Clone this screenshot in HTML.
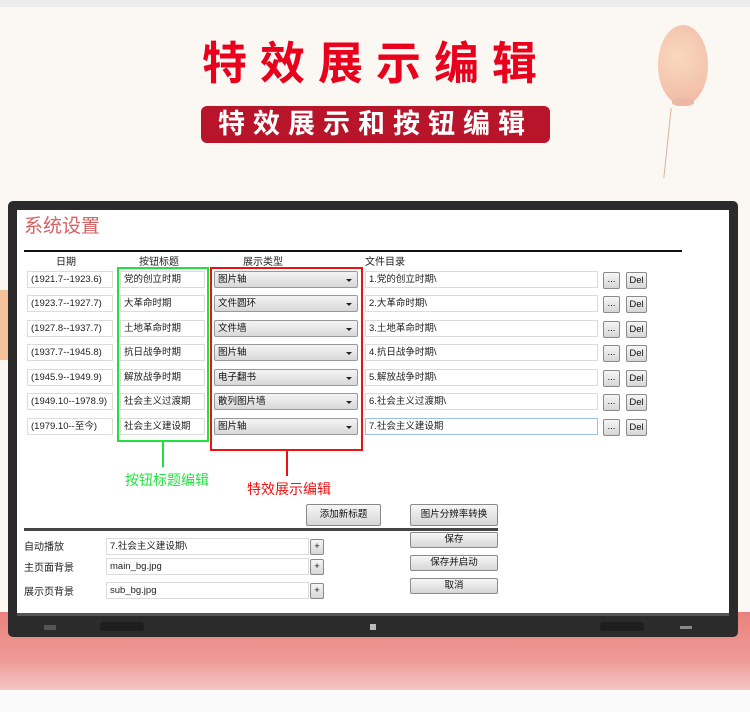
<!DOCTYPE html>
<html><head><meta charset="utf-8"><style>
*{margin:0;padding:0;box-sizing:border-box}
body{width:750px;height:712px;overflow:hidden;position:relative;background:#fbf7f2;font-family:"Liberation Sans","Noto Sans CJK SC",sans-serif}
.a{position:absolute}
.t1{left:202px;top:36px;font-size:45px;font-weight:bold;color:#e8001c;letter-spacing:13px;white-space:nowrap;line-height:56px}
.ban{left:201px;top:106px;width:349px;height:37px;background:#b8142a;border-radius:6px;color:#fff;font-size:27px;font-weight:bold;letter-spacing:8px;text-align:center;line-height:37px;white-space:nowrap}
.frame{left:8px;top:201px;width:730px;height:436px;background:#2b2b2b;border-radius:5px}
.screen{left:17px;top:210px;width:712px;height:403px;background:#fff}
.s{font-size:10px;color:#222;white-space:nowrap}
.in{border:1px solid #dcdcdc;background:#fff;height:17px;font-size:9.5px;line-height:15px;padding-left:3px;color:#222;white-space:nowrap;overflow:hidden}
.sel{border:1px solid #999;border-radius:2px;background:linear-gradient(#f4f4f4,#d8d8d8);height:17px;font-size:9.5px;line-height:15px;padding-left:3px;color:#111}
.sel:after{content:"";position:absolute;right:5px;top:7px;border:3px solid transparent;border-top:3px solid #222}
.btn{border:1px solid #8a8a8a;border-radius:2px;background:linear-gradient(#f6f6f6,#d6d6d6);font-size:9.5px;text-align:center;color:#111;white-space:nowrap}
</style></head><body>
<div class="a" style="left:0;top:0;width:750px;height:7px;background:#ececec"></div>
<div class="a" style="left:658px;top:25px;width:50px;height:80px;border-radius:50%;background:radial-gradient(circle at 40% 40%,#f8d2b0,#eda58e);opacity:.8"></div>
<div class="a" style="left:672px;top:98px;width:22px;height:8px;border-radius:40%;background:#eab8a4"></div>
<div class="a" style="left:667px;top:108px;width:1px;height:70px;background:#dbb0a0;transform:rotate(6deg)"></div>
<div class="a" style="left:0;top:612px;width:750px;height:80px;background:linear-gradient(#e9827d,#ee9a96 60%,#f4c9c8)"></div>
<div class="a" style="left:0;top:690px;width:750px;height:22px;background:#fafafa"></div>
<div class="a" style="left:0;top:290px;width:8px;height:70px;background:#f0a060;opacity:.6"></div>
<div class="a t1">特效展示编辑</div>
<div class="a ban">特效展示和按钮编辑</div>
<div class="a frame"></div>
<div class="a screen"></div>
<div class="a" style="left:17px;top:613px;width:712px;height:3px;background:#555"></div>
<div class="a" style="left:100px;top:622px;width:44px;height:9px;background:#1e1e1e;border-radius:3px"></div>
<div class="a" style="left:600px;top:622px;width:44px;height:9px;background:#1e1e1e;border-radius:3px"></div>
<div class="a" style="left:370px;top:624px;width:6px;height:6px;background:#bbb"></div>
<div class="a" style="left:44px;top:625px;width:12px;height:5px;background:#555"></div>
<div class="a" style="left:680px;top:626px;width:12px;height:3px;background:#888"></div>
<div class="a" style="left:24px;top:211px;font-size:19px;color:#d86060">系统设置</div>
<div class="a" style="left:24px;top:250px;width:658px;height:2px;background:#111"></div>
<div class="a s" style="left:56px;top:253px">日期</div>
<div class="a s" style="left:139px;top:253px">按钮标题</div>
<div class="a s" style="left:243px;top:253px">展示类型</div>
<div class="a s" style="left:365px;top:253px">文件目录</div>

<div class="a in" style="left:27px;top:271px;width:86px">(1921.7--1923.6)</div>
<div class="a in" style="left:120px;top:271px;width:85px">党的创立时期</div>
<div class="a sel" style="left:214px;top:271px;width:144px">图片轴</div>
<div class="a in" style="left:365px;top:271px;width:233px">1.党的创立时期\</div>
<div class="a btn" style="left:603px;top:272px;width:17px;height:17px;line-height:14px">...</div>
<div class="a btn" style="left:626px;top:272px;width:21px;height:17px;line-height:15px">Del</div>

<div class="a in" style="left:27px;top:295px;width:86px">(1923.7--1927.7)</div>
<div class="a in" style="left:120px;top:295px;width:85px">大革命时期</div>
<div class="a sel" style="left:214px;top:295px;width:144px">文件圆环</div>
<div class="a in" style="left:365px;top:295px;width:233px">2.大革命时期\</div>
<div class="a btn" style="left:603px;top:296px;width:17px;height:17px;line-height:14px">...</div>
<div class="a btn" style="left:626px;top:296px;width:21px;height:17px;line-height:15px">Del</div>

<div class="a in" style="left:27px;top:320px;width:86px">(1927.8--1937.7)</div>
<div class="a in" style="left:120px;top:320px;width:85px">土地革命时期</div>
<div class="a sel" style="left:214px;top:320px;width:144px">文件墙</div>
<div class="a in" style="left:365px;top:320px;width:233px">3.土地革命时期\</div>
<div class="a btn" style="left:603px;top:321px;width:17px;height:17px;line-height:14px">...</div>
<div class="a btn" style="left:626px;top:321px;width:21px;height:17px;line-height:15px">Del</div>

<div class="a in" style="left:27px;top:344px;width:86px">(1937.7--1945.8)</div>
<div class="a in" style="left:120px;top:344px;width:85px">抗日战争时期</div>
<div class="a sel" style="left:214px;top:344px;width:144px">图片轴</div>
<div class="a in" style="left:365px;top:344px;width:233px">4.抗日战争时期\</div>
<div class="a btn" style="left:603px;top:345px;width:17px;height:17px;line-height:14px">...</div>
<div class="a btn" style="left:626px;top:345px;width:21px;height:17px;line-height:15px">Del</div>

<div class="a in" style="left:27px;top:369px;width:86px">(1945.9--1949.9)</div>
<div class="a in" style="left:120px;top:369px;width:85px">解放战争时期</div>
<div class="a sel" style="left:214px;top:369px;width:144px">电子翻书</div>
<div class="a in" style="left:365px;top:369px;width:233px">5.解放战争时期\</div>
<div class="a btn" style="left:603px;top:370px;width:17px;height:17px;line-height:14px">...</div>
<div class="a btn" style="left:626px;top:370px;width:21px;height:17px;line-height:15px">Del</div>

<div class="a in" style="left:27px;top:393px;width:86px">(1949.10--1978.9)</div>
<div class="a in" style="left:120px;top:393px;width:85px">社会主义过渡期</div>
<div class="a sel" style="left:214px;top:393px;width:144px">散列图片墙</div>
<div class="a in" style="left:365px;top:393px;width:233px">6.社会主义过渡期\</div>
<div class="a btn" style="left:603px;top:394px;width:17px;height:17px;line-height:14px">...</div>
<div class="a btn" style="left:626px;top:394px;width:21px;height:17px;line-height:15px">Del</div>

<div class="a in" style="left:27px;top:418px;width:86px">(1979.10--至今)</div>
<div class="a in" style="left:120px;top:418px;width:85px">社会主义建设期</div>
<div class="a sel" style="left:214px;top:418px;width:144px">图片轴</div>
<div class="a in" style="left:365px;top:418px;width:233px;border-color:#9cc0e0">7.社会主义建设期</div>
<div class="a btn" style="left:603px;top:419px;width:17px;height:17px;line-height:14px">...</div>
<div class="a btn" style="left:626px;top:419px;width:21px;height:17px;line-height:15px">Del</div>

<div class="a" style="left:117px;top:267px;width:92px;height:175px;border:2px solid #22e040"></div>
<div class="a" style="left:162px;top:441px;width:2px;height:26px;background:#22e040"></div>
<div class="a" style="left:125px;top:470px;font-size:14px;color:#22e040">按钮标题编辑</div>
<div class="a" style="left:210px;top:267px;width:153px;height:184px;border:2px solid #ee1111"></div>
<div class="a" style="left:286px;top:450px;width:2px;height:26px;background:#ee1111"></div>
<div class="a" style="left:247px;top:479px;font-size:14px;color:#ee1111">特效展示编辑</div>

<div class="a btn" style="left:306px;top:504px;width:75px;height:22px;line-height:20px">添加新标题</div>
<div class="a btn" style="left:410px;top:504px;width:88px;height:22px;line-height:20px">图片分辨率转换</div>
<div class="a" style="left:24px;top:528px;width:474px;height:3px;background:#444"></div>
<div class="a s" style="left:24px;top:538px">自动播放</div>
<div class="a s" style="left:24px;top:559px">主页面背景</div>
<div class="a s" style="left:24px;top:583px">展示页背景</div>
<div class="a in" style="left:106px;top:538px;width:203px">7.社会主义建设期\</div>
<div class="a in" style="left:106px;top:558px;width:203px">main_bg.jpg</div>
<div class="a in" style="left:106px;top:582px;width:203px">sub_bg.jpg</div>
<div class="a btn" style="left:310px;top:539px;width:14px;height:16px;line-height:14px">+</div>
<div class="a btn" style="left:310px;top:559px;width:14px;height:16px;line-height:14px">+</div>
<div class="a btn" style="left:310px;top:583px;width:14px;height:16px;line-height:14px">+</div>
<div class="a btn" style="left:410px;top:532px;width:88px;height:16px;line-height:14px">保存</div>
<div class="a btn" style="left:410px;top:555px;width:88px;height:16px;line-height:14px">保存并启动</div>
<div class="a btn" style="left:410px;top:578px;width:88px;height:16px;line-height:14px">取消</div>
</body></html>
